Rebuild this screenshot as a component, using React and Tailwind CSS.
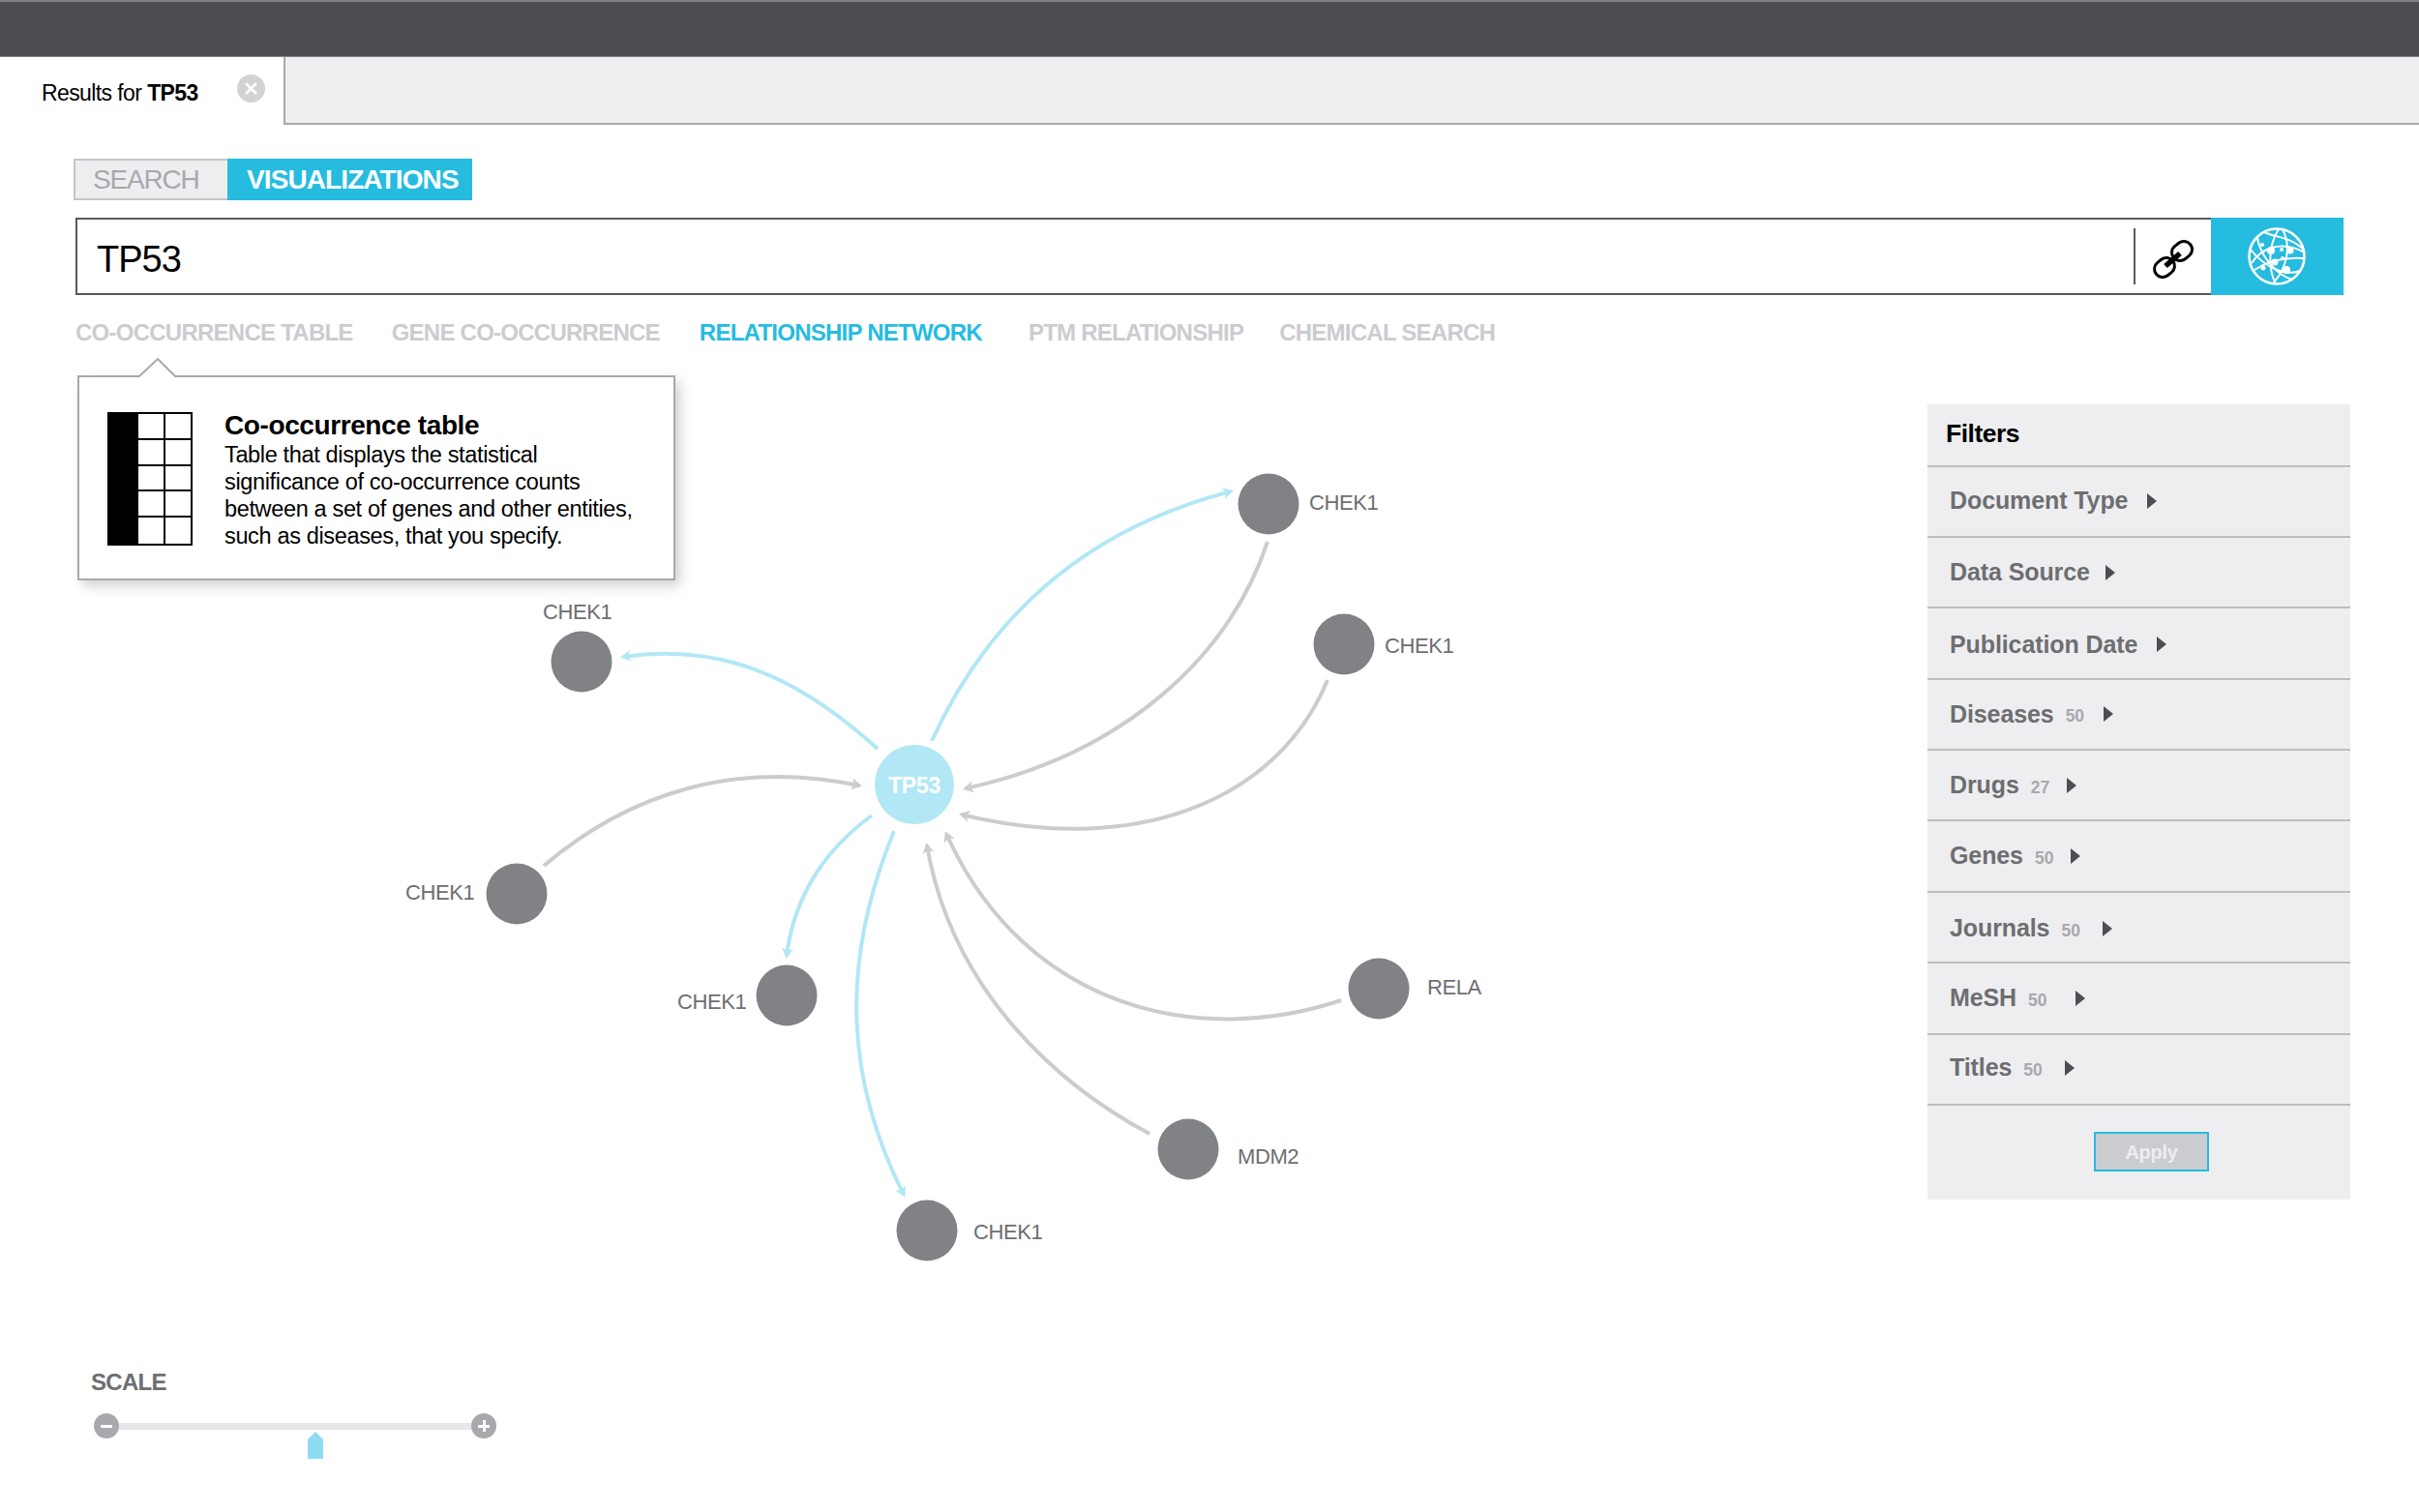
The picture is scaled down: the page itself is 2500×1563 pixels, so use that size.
import React from "react";

// Node and edge coordinates are in page pixels; the canvas starts at y = 370.
const CANVAS_TOP = 370;

const NODES = [
  { x: 1311, y: 521, label: "CHEK1", lx: 1353, ly: 520 },
  { x: 1389, y: 666, label: "CHEK1", lx: 1431, ly: 668 },
  { x: 601, y: 684, label: "CHEK1", lx: 561, ly: 633 },
  { x: 534, y: 924, label: "CHEK1", lx: 419, ly: 923 },
  { x: 813, y: 1029, label: "CHEK1", lx: 700, ly: 1036 },
  { x: 1425, y: 1022, label: "RELA", lx: 1475, ly: 1021 },
  { x: 1228, y: 1188, label: "MDM2", lx: 1279, ly: 1196 },
  { x: 958, y: 1272, label: "CHEK1", lx: 1006, ly: 1274 },
];

const EDGES = [
  { d: "M963 766 C1025 630 1130 545 1272 508", blue: true },
  { d: "M1310 560 C1270 680 1160 780 998 815" },
  { d: "M1372 703 C1320 830 1170 886 994 842" },
  { d: "M907 774 C820 695 740 665 644 679", blue: true },
  { d: "M562 895 C650 820 760 785 888 812" },
  { d: "M901 843 C850 880 820 930 813 988", blue: true },
  { d: "M924 859 C866 1000 876 1120 934 1235", blue: true },
  { d: "M1188 1172 C1100 1125 985 1030 958 874" },
  { d: "M1386 1034 C1240 1083 1060 1044 978 862" },
];

const FILTERS = [
  { name: "Document Type", arrow: "ml-5" },
  { name: "Data Source", arrow: "ml-4" },
  { name: "Publication Date", arrow: "ml-5", nudge: "pt-[3px]" },
  { name: "Diseases", count: 50, arrow: "ml-5" },
  { name: "Drugs", count: 27, arrow: "ml-[18px]" },
  { name: "Genes", count: 50, arrow: "ml-[18px]" },
  { name: "Journals", count: 50, arrow: "ml-[23px]", nudge: "pt-[3px]" },
  { name: "MeSH", count: 50, arrow: "ml-[29px]" },
  { name: "Titles", count: 50, arrow: "ml-[23px]", nudge: "pb-[3px]" },
];

function LinkIcon() {
  return (
    <svg width="44" height="44" viewBox="0 0 44 44" className="shrink-0">
      <g fill="none" stroke="#000" strokeWidth="3">
        <rect x="20" y="5" width="22" height="17" rx="8.5" transform="rotate(-38 31 13.5)" />
        <rect x="2" y="22" width="22" height="17" rx="8.5" transform="rotate(-38 13 30.5)" />
      </g>
      <path d="M14 29 L29 16" stroke="#000" strokeWidth="5.5" />
    </svg>
  );
}

function GlobeIcon() {
  return (
    <svg width="62" height="62" viewBox="0 0 62 62">
      <g fill="none" stroke="#fff" strokeWidth="2">
        <circle cx="31" cy="31" r="28.5" strokeWidth="2.6" />
        <path d="M5 38 C14 24 34 13 60 27" />
        <path d="M4 24 C18 42 40 52 55 46" />
        <path d="M18 6 C30 12 44 10 59 24" />
        <path d="M33 3 C22 20 22 44 30 60" />
        <path d="M37 3 C46 20 42 42 28 58" />
        <path d="M11 12 C14 30 30 50 47 55" />
        <path d="M8 45 C22 36 40 32 58 33" />
      </g>
      <g fill="#fff">
        <circle cx="25" cy="25" r="4" />
        <circle cx="29" cy="37" r="3.5" />
        <circle cx="41" cy="45" r="4" />
        <circle cx="45" cy="25" r="3.5" />
        <circle cx="36" cy="24" r="2" />
        <circle cx="37" cy="33" r="2" />
        <circle cx="16" cy="19" r="2" />
        <circle cx="17" cy="43" r="2.5" />
      </g>
    </svg>
  );
}

function TableIcon() {
  return (
    <div className="grid h-[138px] w-[88px] shrink-0 grid-cols-[28px_1fr_1fr] grid-rows-5 border-2 border-black">
      <div className="row-span-5 bg-black" />
      {Array.from({ length: 10 }).map((_, i) => (
        <div
          key={i}
          className="border-b-2 border-l-2 border-black last:border-b-0 [&:nth-last-child(2)]:border-b-0"
        />
      ))}
    </div>
  );
}

function Popover() {
  return (
    <div className="absolute left-[80px] top-[18px] z-10 flex h-[212px] w-[618px] items-start border-2 border-[#a7a9ac] bg-white pl-[29px] pt-[36px] shadow-[5px_6px_12px_rgba(0,0,0,0.18)]">
      <svg width="42" height="20" viewBox="0 0 42 20" className="absolute left-[60px] top-[-20px]">
        <path d="M1 20 L21 1 L41 20 L41 22 L1 22 Z" fill="#fff" />
        <path d="M0 20 L2 19 L21 1 L39 19 L42 20" fill="none" stroke="#a7a9ac" strokeWidth="2" />
      </svg>
      <TableIcon />
      <div className="ml-[33px] mt-[-2px] text-black">
        <div className="text-[28px] font-bold leading-[32px] tracking-[-0.4px]">Co-occurrence table</div>
        <p className="text-[23.5px] leading-[28px] tracking-[-0.35px]">
          Table that displays the statistical
          <br />
          significance of co-occurrence counts
          <br />
          between a set of genes and other entities,
          <br />
          such as diseases, that you specify.
        </p>
      </div>
    </div>
  );
}

function Graph() {
  return (
    <div className="absolute left-0 top-0 h-[1193px] w-[1950px]">
      <svg width="1950" height="1193" viewBox={`0 ${CANVAS_TOP} 1950 1193`} className="absolute left-0 top-0">
        <defs>
          <marker id="arrow-gray" markerUnits="userSpaceOnUse" markerWidth="16" markerHeight="16" refX="10" refY="8" orient="auto">
            <path d="M2 2 L13 8 L2 14 L5 8 Z" fill="#cbccd0" />
          </marker>
          <marker id="arrow-blue" markerUnits="userSpaceOnUse" markerWidth="16" markerHeight="16" refX="10" refY="8" orient="auto">
            <path d="M2 2 L13 8 L2 14 L5 8 Z" fill="#b2e7f5" />
          </marker>
        </defs>
        {EDGES.map((e, i) => (
          <path
            key={i}
            d={e.d}
            fill="none"
            stroke={e.blue ? "#b2e7f5" : "#cbccd0"}
            strokeWidth="4"
            markerEnd={e.blue ? "url(#arrow-blue)" : "url(#arrow-gray)"}
          />
        ))}
      </svg>
      {NODES.map((n, i) => (
        <React.Fragment key={i}>
          <div
            className="absolute h-[63px] w-[63px] -translate-x-1/2 -translate-y-1/2 rounded-full bg-[#808285]"
            style={{ left: n.x, top: n.y - CANVAS_TOP }}
          />
          <div
            className="absolute -translate-y-1/2 text-[22px] leading-none tracking-[-0.4px] text-[#6d6e71]"
            style={{ left: n.lx, top: n.ly - CANVAS_TOP }}
          >
            {n.label}
          </div>
        </React.Fragment>
      ))}
      <div className="absolute left-[904px] top-[400px] flex h-[82px] w-[82px] items-center justify-center rounded-full bg-[#b2e7f5] pt-[2px] text-[23px] font-bold tracking-[-0.3px] text-white">
        TP53
      </div>
    </div>
  );
}

function ScaleControl() {
  return (
    <div className="absolute left-[94px] top-[1046px] w-[430px]">
      <div className="text-[24px] font-bold leading-[26px] tracking-[-0.7px] text-[#6d6e71]">SCALE</div>
      <div className="relative ml-[3px] mt-[19px] flex h-[26px] w-[416px] items-center justify-between">
        <div className="absolute left-[13px] right-[13px] top-[10px] h-[7px] bg-[#e6e7e8]" />
        <div className="relative flex h-[26px] w-[26px] items-center justify-center rounded-full bg-[#a7a9ac]">
          <div className="h-[3px] w-[12px] bg-white" />
        </div>
        <div className="relative flex h-[26px] w-[26px] items-center justify-center rounded-full bg-[#a7a9ac]">
          <div className="h-[3px] w-[12px] bg-white" />
          <div className="absolute h-[12px] w-[3px] bg-white" />
        </div>
      </div>
      <svg width="16" height="28" viewBox="0 0 16 28" className="absolute left-[224px] top-[64px]">
        <path d="M8 0 L16 8 L16 28 L0 28 L0 8 Z" fill="#8fdcf1" />
      </svg>
    </div>
  );
}

function FilterPanel() {
  return (
    <div className="relative z-10 h-[822px] w-[437px] bg-[#eeeef0]">
      <div className="flex h-[64.5px] items-center border-b-2 border-[#bcbec0] pl-[19px] text-[26.5px] font-bold tracking-[-0.5px] text-black">
        Filters
      </div>
      {FILTERS.map((f) => (
        <div key={f.name} className={`flex h-[73.4px] items-center border-b-2 border-[#bcbec0] pl-[23px] ${f.nudge || ""}`}>
          <span className="text-[25px] font-bold tracking-[-0.1px] text-[#6d6e71]">{f.name}</span>
          {f.count ? <span className="ml-[12px] mt-[4px] text-[17.5px] font-bold text-[#a7a9ac]">{f.count}</span> : null}
          <svg width="10" height="16" viewBox="0 0 10 16" className={f.arrow}>
            <path d="M0 0 L10 8 L0 16 Z" fill="#4d4e53" />
          </svg>
        </div>
      ))}
      <div className="mt-[27px] flex justify-center pl-[26px]">
        <button className="h-[41px] w-[119px] border-2 border-[#25bce0] bg-[#cbccd0] text-[20px] font-bold tracking-[-0.3px] text-[#eeeef0]">
          Apply
        </button>
      </div>
    </div>
  );
}

export default function App() {
  return (
    <div className="h-[1563px] w-[2500px] overflow-hidden bg-white font-['Liberation_Sans',Arial,sans-serif]">
      <div className="h-[59px] border-y border-t-2 border-y-[#808285] bg-[#4d4e53]" />

      <div className="flex h-[70px]">
        <div className="flex w-[293px] items-center pl-[43px]">
          <span className="pt-[5px] text-[23px] tracking-[-0.6px] text-black">
            Results for <b>TP53</b>
          </span>
          <span className="ml-[40px] mt-[-6px] flex h-[29px] w-[29px] items-center justify-center rounded-full bg-[#d1d3d4]">
            <svg width="15" height="15" viewBox="0 0 15 15">
              <path d="M2 2 L13 13 M13 2 L2 13" stroke="#fff" strokeWidth="2.5" />
            </svg>
          </span>
        </div>
        <div className="flex-1 border-b-2 border-l-2 border-[#a7a9ac] bg-[#eeeef0]" />
      </div>

      <div className="ml-[76px] mt-[35px] flex h-[43px] w-fit">
        <div className="flex w-[159px] items-center border-2 border-r-0 border-[#c4c5c8] bg-[#eeeef0] pl-[18px] text-[28px] tracking-[-1.2px] text-[#a7a9ac]">
          SEARCH
        </div>
        <div className="flex w-[253px] items-center bg-[#25bce0] pl-[20px] text-[28px] font-bold tracking-[-0.9px] text-white">
          VISUALIZATIONS
        </div>
      </div>

      <div className="ml-[78px] mt-[18px] flex h-[80px] w-[2344px]">
        <div className="flex flex-1 items-center border-y-2 border-l-2 border-[#58595b] pl-[20px] pr-[19px]">
          <span className="flex-1 pt-[7px] text-[38px] tracking-[-1px] text-black">TP53</span>
          <div className="h-[58px] w-[2px] bg-[#58595b]" />
          <div className="ml-[17px] mr-[-2px] mt-[5px]">
            <LinkIcon />
          </div>
        </div>
        <div className="flex w-[137px] items-center justify-center bg-[#25bce0] pb-[1px] pr-[1px]">
          <GlobeIcon />
        </div>
      </div>

      <div className="ml-[78px] mt-[25px] flex h-[28px] items-center text-[24px] font-bold tracking-[-0.75px] text-[#cbccd0]">
        <span>CO-OCCURRENCE TABLE</span>
        <span className="ml-[40px]">GENE CO-OCCURRENCE</span>
        <span className="ml-[41px] text-[#25bce0]">RELATIONSHIP NETWORK</span>
        <span className="ml-[48px]">PTM RELATIONSHIP</span>
        <span className="ml-[37px]">CHEMICAL SEARCH</span>
      </div>

      <div className="relative mt-[12px] h-[1193px] w-[2500px]">
        <Graph />
        <Popover />
        <ScaleControl />
        <div className="absolute right-[71px] top-[48px]">
          <FilterPanel />
        </div>
      </div>
    </div>
  );
}
